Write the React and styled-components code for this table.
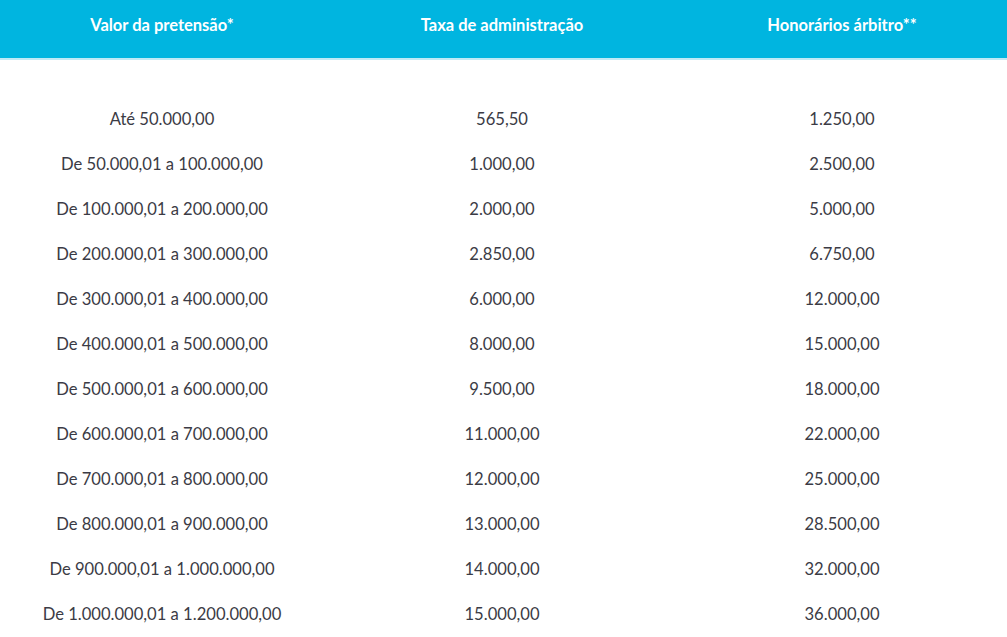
import React from 'react';
import styled, { createGlobalStyle } from 'styled-components';

const GlobalStyle = createGlobalStyle`
  html, body {
    margin: 0;
    padding: 0;
    background: #ffffff;
    overflow: hidden;
  }
  body {
    font-family: Lato, "Open Sans", sans-serif;
  }
`;

const Table = styled.div`
  width: 100%;
`;

const Header = styled.div`
  display: grid;
  grid-template-columns: 324px 356px 324px;
  height: 60px;
  background-color: #00b5e0;
  border-bottom: 2px solid #bfeaf6;
  box-sizing: border-box;
  align-items: center;
`;

const HeadCell = styled.div`
  color: #ffffff;
  font-weight: 700;
  font-size: 16.5px;
  text-align: center;
  padding-bottom: 8px;
`;

const Body = styled.div`
  padding-top: 36px;
`;

const Row = styled.div`
  display: grid;
  grid-template-columns: 324px 356px 324px;
  height: 45px;
  align-items: center;
`;

const Cell = styled.div`
  color: #3b3b45;
  font-size: 16.6px;
  text-align: center;
`;

const rows = [
  ['Até 50.000,00', '565,50', '1.250,00'],
  ['De 50.000,01 a 100.000,00', '1.000,00', '2.500,00'],
  ['De 100.000,01 a 200.000,00', '2.000,00', '5.000,00'],
  ['De 200.000,01 a 300.000,00', '2.850,00', '6.750,00'],
  ['De 300.000,01 a 400.000,00', '6.000,00', '12.000,00'],
  ['De 400.000,01 a 500.000,00', '8.000,00', '15.000,00'],
  ['De 500.000,01 a 600.000,00', '9.500,00', '18.000,00'],
  ['De 600.000,01 a 700.000,00', '11.000,00', '22.000,00'],
  ['De 700.000,01 a 800.000,00', '12.000,00', '25.000,00'],
  ['De 800.000,01 a 900.000,00', '13.000,00', '28.500,00'],
  ['De 900.000,01 a 1.000.000,00', '14.000,00', '32.000,00'],
  ['De 1.000.000,01 a 1.200.000,00', '15.000,00', '36.000,00'],
];

export default function App() {
  return (
    <>
      <GlobalStyle />
      <Table>
        <Header>
          <HeadCell>Valor da pretensão*</HeadCell>
          <HeadCell>Taxa de administração</HeadCell>
          <HeadCell>Honorários árbitro**</HeadCell>
        </Header>
        <Body>
          {rows.map((r) => (
            <Row key={r[0]}>
              {r.map((c, i) => (
                <Cell key={i}>{c}</Cell>
              ))}
            </Row>
          ))}
        </Body>
      </Table>
    </>
  );
}
